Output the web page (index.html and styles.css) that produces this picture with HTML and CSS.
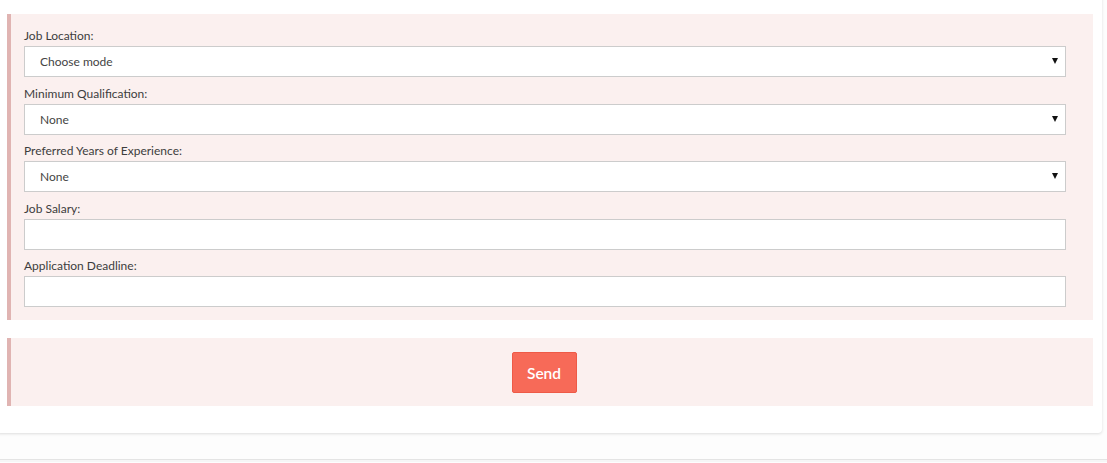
FILE: index.html
```html
<!DOCTYPE html>
<html lang="en">
<head>
<meta charset="utf-8">
<title>Job form</title>
<link rel="stylesheet" href="styles.css">
</head>
<body>
<div class="page">
  <div class="card">
    <form class="form">
      <div class="panel fields">
        <div class="group">
          <label class="label">Job Location:</label>
          <div class="select-wrap">
            <select class="control select"><option>Choose mode</option></select>
          </div>
        </div>
        <div class="group">
          <label class="label">Minimum Qualification:</label>
          <div class="select-wrap">
            <select class="control select"><option>None</option></select>
          </div>
        </div>
        <div class="group">
          <label class="label">Preferred Years of Experience:</label>
          <div class="select-wrap">
            <select class="control select"><option>None</option></select>
          </div>
        </div>
        <div class="group">
          <label class="label">Job Salary:</label>
          <input class="control input" type="text">
        </div>
        <div class="group">
          <label class="label">Application Deadline:</label>
          <input class="control input" type="text">
        </div>
      </div>
      <div class="panel actions">
        <button class="btn-send" type="button">Send</button>
      </div>
    </form>
  </div>
  <div class="footer"></div>
</div>
</body>
</html>
```

FILE: styles.css
```css
* { box-sizing: border-box; }

html, body {
  margin: 0;
  padding: 0;
  background: #fdfdfd;
  font-family: Lato, "Open Sans", Arial, sans-serif;
  color: #444;
  overflow: hidden;
}

.page {
  display: flex;
  flex-direction: column;
}

.card {
  margin: -10px 5px 0 -4px;
  padding: 24px 9px 27px 11px;
  background: #fff;
  border-radius: 4px;
  box-shadow: 0 1px 3px rgba(0, 0, 0, 0.13);
}

.form {
  display: flex;
  flex-direction: column;
  gap: 18px;
}

.panel {
  background: #fbf0ef;
  border-left: 4px solid #e0b4b2;
  padding: 12px 27px 13px 13px;
}

.fields {
  display: flex;
  flex-direction: column;
  gap: 6.5px;
}

.group {
  display: flex;
  flex-direction: column;
}

.label {
  display: block;
  font-size: 12px;
  line-height: 19px;
  margin-bottom: 1px;
  color: #3d3d3d;
}

.control {
  display: block;
  width: 100%;
  height: 31px;
  border: 1px solid #cccccc;
  background: #fff;
  border-radius: 0;
  font-family: Lato, "Open Sans", Arial, sans-serif;
  font-size: 12px;
  color: #444;
  outline: none;
}

.select-wrap {
  position: relative;
}

.select {
  appearance: none;
  -webkit-appearance: none;
  padding: 0 0 0 15px;
}

.select-wrap::after {
  content: "";
  position: absolute;
  right: 8px;
  top: 12px;
  width: 0;
  height: 0;
  border-left: 3px solid transparent;
  border-right: 3px solid transparent;
  border-top: 6px solid #111;
  pointer-events: none;
}

.input {
  padding: 0 10px;
}

.actions {
  display: flex;
  justify-content: center;
  padding-top: 14px;
  padding-bottom: 13px;
  padding-right: 29px;
}

.btn-send {
  width: 65px;
  height: 41px;
  background: #f76a58;
  border: 1px solid #ee5a47;
  border-radius: 2px;
  color: #fff;
  font-family: Lato, "Open Sans", Arial, sans-serif;
  font-size: 15.5px;
  font-weight: 600;
  padding: 0;
}

.footer {
  margin-top: 26px;
  height: 3px;
  border-top: 1px solid #e4e4e4;
  background: #f6f6f6;
}
```
